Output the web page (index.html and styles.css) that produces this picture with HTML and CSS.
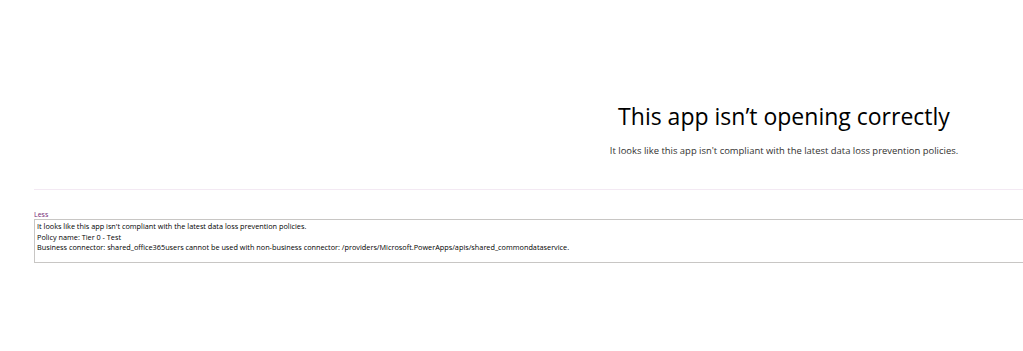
FILE: index.html
```html
<!DOCTYPE html>
<html lang="en">

<head>
  <meta charset="UTF-8">
  <meta name="viewport" content="width=device-width, initial-scale=1.0">
  <title>This app isn't opening correctly</title>
  <link rel="stylesheet" href="styles.css">
</head>

<body>
  <div id="container">
    <div class="message">
      <h1>This app isn’t opening correctly</h1>
      <p>It looks like this app isn't compliant with the latest data loss prevention policies.</p>
    </div>

    <div class="details">
      <a href="#" class="toggle">Less</a>
      <textarea readonly>It looks like this app isn't compliant with the latest data loss prevention policies.
Policy name: Tier 0 - Test
Business connector: shared_office365users cannot be used with non-business connector: /providers/Microsoft.PowerApps/apis/shared_commondataservice.</textarea>
    </div>
  </div>
</body>

</html>
```

FILE: styles.css
```css
html,
body {
  overflow: hidden;
}

body {
  margin: 0;
  background-color: #fff;
  font-family: 'Open Sans', 'Noto Sans', sans-serif;
  color: #201f1e;
}

#container {
  width: 1500px;
  margin-left: 34px;
  padding-top: 100px;
}

.message {
  text-align: center;
  padding-bottom: 32px;
  border-bottom: 1px solid #f3e9f3;
}

.message h1 {
  margin: 0;
  font-size: 23px;
  font-weight: 400;
  color: #000;
}

.message p {
  margin: 12px 0 0;
  font-size: 9.45px;
  color: #323130;
}

.details {
  padding-top: 20px;
}

.toggle {
  display: block;
  font-size: 7px;
  line-height: 9px;
  color: #742774;
  text-decoration: none;
}

.details textarea {
  display: block;
  box-sizing: border-box;
  width: 100%;
  height: 44px;
  margin: 0;
  padding: 1px 2px;
  font-family: 'Open Sans', 'Noto Sans', sans-serif;
  font-size: 7.3px;
  line-height: 10.5px;
  color: #000;
  border: 1px solid #c8c6c4;
  resize: none;
  overflow: hidden;
}
```
